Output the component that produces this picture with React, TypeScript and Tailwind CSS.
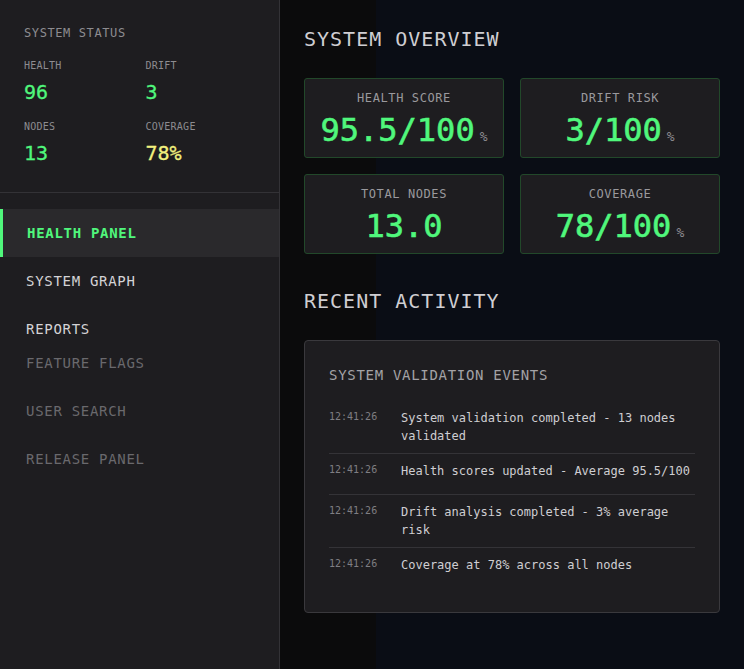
const mono = "font-['DejaVu_Sans_Mono','Liberation_Mono',monospace]";

const stats = [
  { label: "HEALTH", value: "96", tone: "text-[#50f77c]" },
  { label: "DRIFT", value: "3", tone: "text-[#50f77c]" },
  { label: "NODES", value: "13", tone: "text-[#50f77c]" },
  { label: "COVERAGE", value: "78%", tone: "text-[#f1f07e]" },
];

const metrics = [
  { label: "HEALTH SCORE", value: "95.5/100", unit: "%" },
  { label: "DRIFT RISK", value: "3/100", unit: "%" },
  { label: "TOTAL NODES", value: "13.0", unit: "" },
  { label: "COVERAGE", value: "78/100", unit: "%" },
];

const events = [
  "System validation completed - 13 nodes validated",
  "Health scores updated - Average 95.5/100",
  "Drift analysis completed - 3% average risk",
  "Coverage at 78% across all nodes",
];

function Sidebar() {
  return (
    <aside className="w-[280px] shrink-0 bg-[#1e1d20] border-r border-[#333236] flex flex-col">
      <div className="px-6 pt-[25px] pb-[27px] border-b border-[#333236]">
        <div className="text-[12px] leading-4 tracking-wider text-[#8d8c90] mb-[19px]">SYSTEM STATUS</div>
        <div className="grid grid-cols-2 gap-x-3 gap-y-[17px]">
          {stats.map((s) => (
            <div key={s.label}>
              <div className="text-[10px] leading-3 tracking-wide text-[#8d8c90] mb-[8px]">{s.label}</div>
              <div className={`text-[20px] leading-6 [-webkit-text-stroke:0.3px_currentColor] ${s.tone}`}>{s.value}</div>
            </div>
          ))}
        </div>
      </div>
      <nav className="pt-4 text-[14px] tracking-wider">
        <div className="h-12 flex items-center bg-[#2a292c] border-l-[3px] border-[#50f77c] pl-6 font-bold text-[#50f77c]">
          HEALTH PANEL
        </div>
        <div className="h-12 flex items-center pl-[26px] text-[#d4d3d6]">SYSTEM GRAPH</div>
        <div className="h-[34px] pt-[16px] pl-[26px] leading-4 text-[#d4d3d6]">REPORTS</div>
        {["FEATURE FLAGS", "USER SEARCH", "RELEASE PANEL"].map((t) => (
          <div key={t} className="h-12 flex items-center pl-[26px] text-[#6a696d]">{t}</div>
        ))}
      </nav>
    </aside>
  );
}

function MetricCard({ label, value, unit }: { label: string; value: string; unit: string }) {
  return (
    <div className="h-20 bg-[#1e1d20] border border-[#22482a] rounded-[3px] flex flex-col items-center pt-[11px]">
      <div className="text-[12px] leading-4 tracking-wider text-[#9a999d]">{label}</div>
      <div className="flex items-baseline gap-[5px] mt-[5px]">
        <span className="text-[32px] leading-[38px] text-[#50f77c] [-webkit-text-stroke:0.6px_#50f77c]">{value}</span>
        {unit && <span className="text-[13px] text-[#8d8c90]">{unit}</span>}
      </div>
    </div>
  );
}

export default function App() {
  return (
    <div className={`${mono} w-[744px] h-[669px] flex overflow-hidden bg-[#0a0d15]`}>
      <Sidebar />
      <main className="flex-1 bg-[linear-gradient(to_right,#0b0b0c_96px,#0a0d15_96px)] pl-6 pr-6 pt-[26px]">
        <h1 className="text-[20px] leading-[26px] tracking-wider text-[#cfced2] mb-[26px]">SYSTEM OVERVIEW</h1>
        <div className="grid grid-cols-2 gap-4">
          {metrics.map((m) => (
            <MetricCard key={m.label} {...m} />
          ))}
        </div>
        <h2 className="text-[20px] leading-[26px] tracking-wider text-[#cfced2] mt-[34px] mb-[26px]">RECENT ACTIVITY</h2>
        <div className="bg-[#1e1d20] border border-[#3a393d] rounded-[4px] px-6 pt-6 pb-[23px]">
          <div className="text-[14px] leading-5 tracking-wider text-[#a3a2a6] mb-4">SYSTEM VALIDATION EVENTS</div>
          <div className="flex flex-col">
            {events.map((e, i) => (
              <div
                key={i}
                className={`flex py-2 min-h-[41px] ${i < events.length - 1 ? "border-b border-[#343337]" : ""}`}
              >
                <span className="w-[72px] shrink-0 text-[10px] leading-[16px] text-[#7f7e82]">12:41:26</span>
                <span className="text-[12px] leading-[18px] text-[#cfced2]">{e}</span>
              </div>
            ))}
          </div>
        </div>
      </main>
    </div>
  );
}
